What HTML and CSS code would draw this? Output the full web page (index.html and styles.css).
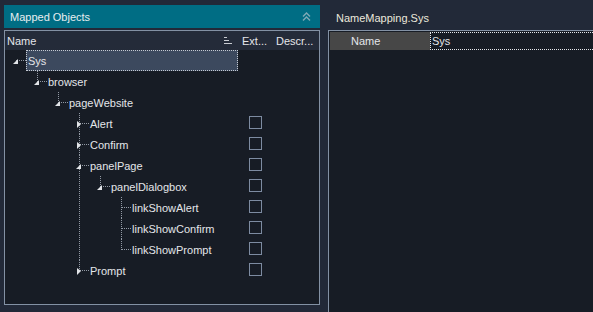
FILE: index.html
```html
<!DOCTYPE html>
<html lang="en">
<head>
  <meta charset="UTF-8">
  <title>Name Mapping</title>
  <link rel="stylesheet" href="styles.css">
</head>
<body>
  <div class="app">
    <section class="objects">
      <header class="panel-title">
        <span>Mapped Objects</span>
        <svg class="collapse" width="9" height="9" viewBox="0 0 9 9">
          <polyline points="1,4.5 4.5,1 8,4.5" fill="none" stroke="#7faab6" stroke-width="1.4"/>
          <polyline points="1,8.5 4.5,5 8,8.5" fill="none" stroke="#7faab6" stroke-width="1.4"/>
        </svg>
      </header>
      <div class="tree-box">
        <div class="tree-head">
          <div class="head-name">
            <span>Name</span>
            <svg class="sort" width="8" height="7" viewBox="0 0 8 7">
              <rect x="0" y="0" width="3" height="1" fill="#c9ccd2"/>
              <rect x="0" y="3" width="5" height="1" fill="#c9ccd2"/>
              <rect x="0" y="6" width="8" height="1" fill="#c9ccd2"/>
            </svg>
          </div>
          <span class="head-col">Ext...</span>
          <span class="head-col">Descr...</span>
        </div>

        <ul class="tree">
          <li>
            <div class="node selected"><span class="twisty open"></span><span class="label">Sys</span></div>
            <ul>
              <li>
                <div class="node"><span class="twisty open"></span><span class="label">browser</span></div>
                <ul>
                  <li>
                    <div class="node"><span class="twisty open"></span><span class="label">pageWebsite</span></div>
                    <ul>
                      <li>
                        <div class="node"><span class="twisty closed"></span><span class="label">Alert</span><span class="check"></span></div>
                      </li>
                      <li>
                        <div class="node"><span class="twisty closed"></span><span class="label">Confirm</span><span class="check"></span></div>
                      </li>
                      <li>
                        <div class="node"><span class="twisty open"></span><span class="label">panelPage</span><span class="check"></span></div>
                        <ul>
                          <li>
                            <div class="node"><span class="twisty open"></span><span class="label">panelDialogbox</span><span class="check"></span></div>
                            <ul>
                              <li>
                                <div class="node"><span class="twisty"></span><span class="label">linkShowAlert</span><span class="check"></span></div>
                              </li>
                              <li>
                                <div class="node"><span class="twisty"></span><span class="label">linkShowConfirm</span><span class="check"></span></div>
                              </li>
                              <li>
                                <div class="node"><span class="twisty"></span><span class="label">linkShowPrompt</span><span class="check"></span></div>
                              </li>
                            </ul>
                          </li>
                        </ul>
                      </li>
                      <li>
                        <div class="node"><span class="twisty closed"></span><span class="label">Prompt</span><span class="check"></span></div>
                      </li>
                    </ul>
                  </li>
                </ul>
              </li>
            </ul>
          </li>
        </ul>
      </div>
    </section>

    <section class="props">
      <header class="props-title">NameMapping.Sys</header>
      <div class="props-box">
        <div class="prop-row">
          <span class="prop-key">Name</span>
          <span class="prop-val">Sys</span>
        </div>
      </div>
    </section>
  </div>
</body>
</html>
```

FILE: styles.css
```css
* {
    margin: 0;
    padding: 0;
    box-sizing: border-box;
}

body {
    font-family: "Liberation Sans", Arial, sans-serif;
    font-size: 11px;
    color: #e4e6ea;
    background-color: #222938;
    width: 593px;
    height: 312px;
    overflow: hidden;
}

.app {
    display: flex;
    height: 312px;
    padding-top: 5px;
}

/* left panel */
.objects {
    width: 316px;
    margin-left: 4px;
    display: flex;
    flex-direction: column;
}

.panel-title {
    height: 23px;
    background-color: #006d84;
    display: flex;
    align-items: center;
    justify-content: space-between;
    padding: 0 9px 0 6px;
    color: #e8eef0;
}

.tree-box {
    margin-top: 2px;
    height: 275px;
    border: 1px solid #8391a4;
    background-color: #171c25;
}

.tree-head {
    display: grid;
    grid-template-columns: 1fr 34px 47px;
    height: 19px;
    align-items: center;
    background-color: #242b39;
}

.head-name {
    display: flex;
    align-items: center;
    padding-left: 2px;
}

.head-name .sort {
    margin-left: auto;
    margin-right: 6px;
}

.head-col {
    padding-left: 4px;
    white-space: nowrap;
}

/* tree */
.tree,
.tree ul {
    list-style: none;
}

.tree ul {
    margin-left: 21px;
}

.tree li {
    position: relative;
}

.tree ul > li::before {
    content: '';
    position: absolute;
    left: 11px;
    top: 0;
    bottom: 0;
    border-left: 1px dotted #9299a4;
}

.tree ul > li:last-child::before {
    bottom: auto;
    height: 11px;
}

.node {
    position: relative;
    display: grid;
    grid-template-columns: 21px 1fr 34px 47px;
    height: 21px;
    align-items: center;
}

.node::before {
    content: '';
    position: absolute;
    left: 11px;
    top: 10px;
    width: 10px;
    border-top: 1px dotted #9299a4;
}

.twisty {
    position: relative;
    height: 21px;
    z-index: 1;
}

.twisty.open::after {
    content: '';
    position: absolute;
    left: 8px;
    top: 9px;
    border-style: solid;
    border-width: 0 0 5px 5px;
    border-color: transparent transparent #e2e4e8 transparent;
}

.twisty.closed::after {
    content: '';
    position: absolute;
    left: 9px;
    top: 8px;
    border-style: solid;
    border-width: 3px 0 4px 4px;
    border-color: transparent transparent transparent #e2e4e8;
}

.label {
    justify-self: start;
    height: 21px;
    line-height: 20px;
    padding: 0 1px 0 0;
    border: 1px dotted transparent;
    white-space: nowrap;
}

.node.selected .label {
    justify-self: stretch;
    padding-left: 1px;
    background-color: #3c495e;
    border-color: #c5cad2;
}

.check {
    grid-column: 3;
    justify-self: center;
    width: 13px;
    height: 13px;
    margin-bottom: 2px;
    border: 1px solid #7d8ba1;
}

/* right panel */
.props {
    flex: 1;
    margin-left: 8px;
    margin-right: -4px;
    display: flex;
    flex-direction: column;
}

.props-title {
    height: 25px;
    padding-left: 8px;
    display: flex;
    align-items: center;
    color: #ebe8dc;
}

.props-box {
    flex: 1;
    border-left: 1px solid #8391a4;
    border-top: 1px solid #8391a4;
    background-color: #171c25;
    padding: 1px 0 0 1px;
}

.prop-row {
    display: flex;
    height: 18px;
}

.prop-key {
    width: 100px;
    background-color: #474747;
    padding-left: 21px;
    line-height: 18px;
}

.prop-val {
    flex: 1;
    border: 1px dotted #e4e6ea;
    padding-left: 1px;
    line-height: 16px;
}
```
